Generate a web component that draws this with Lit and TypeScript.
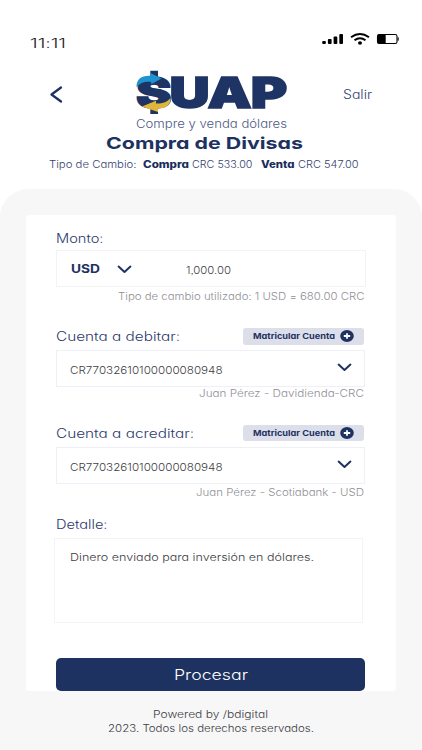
import { LitElement, html, svg, css } from "lit";
import { customElement } from "lit/decorators.js";

/** One line of wide-set text, exactly `width` px long, baseline on the bottom edge of a 10px box. */
const line = (text: string, width: number, cls: string) => html`
  <svg class="line ${cls}" width=${width} height="10">
    <text x="0" y="10" textLength=${width} lengthAdjust="spacingAndGlyphs">${text}</text>
  </svg>`;

const chevron = (cls = "") => html`
  <svg class="chevron ${cls}" width="15" height="9" viewBox="0 0 15 9">
    <path d="M1.6 1.6 7.5 7 13.4 1.6" />
  </svg>`;

const bars = [3, 5, 7.5, 10];

@customElement("app-root")
export class AppRoot extends LitElement {
  static styles = css`
    :host {
      display: flex;
      flex-direction: column;
      box-sizing: border-box;
      height: 750px;
      width: 422px;
      overflow: hidden;
      background: #fff;
      font-family: Inter, "Open Sans", sans-serif;
      font-feature-settings: "cv11", "ss03", "calt" 0;
    }
    svg { display: block; flex: none; overflow: visible; }
    .line { font-size: 10.2px; font-weight: 400; fill: #5f5f63; }
    .status {
      display: flex; flex: none; box-sizing: border-box; justify-content: space-between; align-items: flex-end;
      height: 48px; padding: 0 23px 0 30px;
    }
    .time { font-size: 13px; font-weight: 300; fill: #222; }
    .device { margin-bottom: 3px; }
    .brand { display: flex; flex: none; align-items: flex-start; padding: 22px 50px 0; }
    .back { margin-top: 16px; fill: none; stroke: #1e3262; stroke-width: 2.3; stroke-linecap: round; stroke-linejoin: round; }
    .logo { margin: 0 56px 0 73px; }
    .word { font-weight: 900; fill: #1e3464; stroke: #1e3464; stroke-width: 1.5; }
    .tagline { margin-top: 1.5px; font-size: 12px; font-weight: 300; fill: #4d5a85; }
    .exit { margin-top: 19px; font-size: 12.8px; font-weight: 300; fill: #34426f; }
    .title { margin: 11px 0 0 106px; font-size: 16.6px; font-weight: 700; fill: #1e3262; }
    .rates { display: flex; flex: none; margin: 9.5px 0 0 49px; }
    .rates .line { font-weight: 300; fill: #34426f; }
    .rates .strong { font-weight: 800; fill: #1a2c5c; margin: 0 3px 0 6px; }
    .rates .second { margin-left: 9px; }
    .panel {
      flex: none; box-sizing: border-box; height: 562px; margin-top: 21px;
      padding: 25.5px 26px 0 25.5px; border-radius: 28px 28px 0 0; background: #f7f7f7;
    }
    .card {
      display: flex; flex-direction: column; box-sizing: border-box; height: 476.5px;
      padding: 18.5px 31px 0 30.5px; border-radius: 3px; background: #fff;
    }
    .label { font-size: 12.6px; font-weight: 300; fill: #2b3a6a; }
    .box {
      display: flex; align-items: center; box-sizing: border-box; flex: none;
      width: 309px; height: 36.5px; border: 1px solid #efeffa; padding: 0 12px 0 12.5px;
    }
    .box .value { margin-top: 1px; }
    .amount { width: 310px; height: 37px; margin-top: 6.5px; padding-left: 14px; border-color: #f3f3f6; }
    .currency { font-size: 12.2px; font-weight: 700; fill: #1e3262; margin-top: -1px; }
    .chevron { fill: none; stroke: #1e3262; stroke-width: 2; stroke-linecap: round; stroke-linejoin: round; margin: -1px 0 0 auto; }
    .chevron.near { margin: 2px 54.5px 0 16.5px; }
    .value { font-size: 10.6px; font-weight: 300; fill: #404044; }
    .amount .value { margin-top: 1.5px; }
    .hint { align-self: flex-end; margin-right: 1px; font-weight: 300; fill: #8f8f94; }
    .hint.rate { margin-top: 3px; }
    .hint.debit { margin-top: .2px; }
    .hint.credit { margin-top: 2.5px; }
    .head { display: flex; justify-content: space-between; align-items: center; height: 16.5px; width: 308px; flex: none; }
    .head.debit { margin: 28.5px 0 5.5px; }
    .head.credit { margin: 28px 0 6px; }
    .enroll {
      display: flex; align-items: center; justify-content: space-between; box-sizing: border-box;
      width: 121px; height: 16.5px; padding: 0 10px 0 9.5px; border-radius: 3px; background: #dcdfea;
    }
    .enroll .line { font-size: 8.2px; font-weight: 700; fill: #1e3262; margin-top: -4px; }
    .disc { fill: #1e3262; }
    .plus { stroke: #fff; stroke-width: 1.8; }
    .detail { margin-top: 22.5px; }
    .note {
      box-sizing: border-box; flex: none; width: 309px; height: 85px; margin: 9px 0 0 -2px;
      padding: 12.5px 0 0 15px; border: 1px solid #f4f4f8;
    }
    .submit {
      display: flex; justify-content: center; box-sizing: border-box; flex: none;
      width: 309px; height: 33.5px; margin-top: 35px; padding-top: 12px; border-radius: 5px; background: #1e3262;
    }
    .submit .line { font-size: 14.5px; font-weight: 300; fill: #fff; }
    .footer { display: flex; flex-direction: column; align-items: center; gap: 4px; padding-top: 17px; }
    .footer .line { font-weight: 300; fill: #3c3c44; }
  `;

  private enroll() {
    return html`<div class="enroll">
      ${line("Matricular Cuenta", 82, "")}
      <svg width="14" height="12" viewBox="0 0 14 12">
        <ellipse class="disc" cx="7" cy="6" rx="6.8" ry="5.9" />
        <path class="plus" d="M3.8 6h6.4M7 3.2v5.6" />
      </svg>
    </div>`;
  }

  private account(kind: string, title: string, width: number, owner: string, ownerWidth: number) {
    return html`
      <div class="head ${kind}">${line(title, width, "label")}${this.enroll()}</div>
      <div class="box">${line("CR77032610100000080948", 152.5, "value")}${chevron()}</div>
      ${line(owner, ownerWidth, `hint ${kind}`)}`;
  }

  render() {
    return html`
      <div class="status">
        ${line("11:11", 36, "time")}
        <svg class="device" width="77" height="12" viewBox="0 0 77 12">
          ${bars.map((h, i) => svg`<rect x=${0.2 + i * 5.7} y=${11 - h} width="3.7" height=${h} rx="1" />`)}
          <g fill="none" stroke="#000" stroke-width="2">
            <path d="M29 4.2Q38 -2.2 47 4.2" />
            <path d="M32.5 7.3Q38 3.2 43.5 7.3" />
          </g>
          <ellipse cx="38" cy="10" rx="2" ry="1.7" />
          <rect x="55.5" y="1.5" width="19.5" height="9" rx="1.8" fill="#fff" stroke="#000" stroke-width="1.1" />
          <rect x="55.5" y="1.5" width="8.2" height="9" rx="1.2" />
          <rect x="75.6" y="4.4" width="1.1" height="3.2" />
        </svg>
      </div>
      <div class="brand">
        <svg class="back" width="13" height="17" viewBox="0 0 13 17"><path d="M11 1.5 1.5 8.5 11 15.5" /></svg>
        <div class="logo">
          <svg width="151" height="46" viewBox="0 0 151 46">
            <path fill="#1e3464" d="M14.3 .8h7.7v8h-7.7zM14.3 36h7.7v8h-7.7z" />
            <text class="word" x="0" y="37.8" font-size="43" textLength="35.5" lengthAdjust="spacingAndGlyphs">S</text>
            <text class="word" x="33.6" y="37.8" font-size="43" letter-spacing="-.8" textLength="116.5" lengthAdjust="spacingAndGlyphs">UAP</text>
            <path fill="#1f93cf" d="M.6 17.5C0 9 6 5.3 14.5 5.8L14 2.8 25.5 8.6 15.2 14.2V11.9C8 11.4 4 13 .6 17.5z" />
            <path fill="#dfb53a" d="M34.6 28C34.6 36 29 38.7 22 38.5V42L6 36.5 20 30.8V33.6C27 33.8 31 32 34.6 28z" />
          </svg>
          ${line("Compre y venda dólares", 151, "tagline")}
        </div>
        ${line("Salir", 29, "exit")}
      </div>
      ${line("Compra de Divisas", 197, "title")}
      <div class="rates">
        ${line("Tipo de Cambio:", 87.5, "")}
        ${line("Compra", 46, "strong")}
        ${line("CRC 533.00", 60.5, "")}
        ${line("Venta", 33.5, "strong second")}
        ${line("CRC 547.00", 60.5, "")}
      </div>
      <div class="panel">
        <div class="card">
          ${line("Monto:", 47.5, "label")}
          <div class="box amount">
            ${line("USD", 29, "currency")}
            ${chevron("near")}
            ${line("1,000.00", 45, "value")}
          </div>
          ${line("Tipo de cambio utilizado: 1 USD = 680.00 CRC", 246.5, "hint rate")}
          ${this.account("debit", "Cuenta a debitar:", 124, "Juan Pérez - Davidienda-CRC", 165)}
          ${this.account("credit", "Cuenta a acreditar:", 138, "Juan Pérez - Scotiabank - USD", 168)}
          ${line("Detalle:", 51.5, "label detail")}
          <div class="note">${line("Dinero enviado para inversión en dólares.", 244, "value")}</div>
          <div class="submit">${line("Procesar", 74, "")}</div>
        </div>
        <div class="footer">
          ${line("Powered by /bdigital", 115, "")}
          ${line("2023. Todos los derechos reservados.", 206, "")}
        </div>
      </div>`;
  }
}
